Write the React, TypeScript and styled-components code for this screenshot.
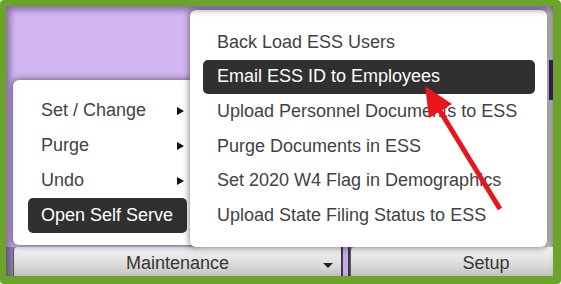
import React from "react";
import styled, { createGlobalStyle } from "styled-components";

const Global = createGlobalStyle`
  html, body { margin: 0; padding: 0; background: #ffffff; }
  body { font-family: "Liberation Sans", Arial, sans-serif; }
`;

const Frame = styled.div`
  position: relative;
  box-sizing: border-box;
  width: 561px;
  height: 284px;
  border-style: solid;
  border-color: #6ba32c;
  border-width: 6px 8px 8px 6px;
  border-radius: 4px;
  background: #d1b6f1;
  display: flex;
  flex-direction: column;
  overflow: hidden;
`;

const Shade = styled.div`
  position: absolute;
  inset: 0;
  pointer-events: none;
  box-shadow: inset 4px 4px 6px rgba(40, 20, 60, 0.45);
  z-index: 5;
`;

const Upper = styled.div`
  flex: 1;
  display: flex;
  justify-content: flex-end;
`;

const RightStrip = styled.div`
  width: 6px;
  background: linear-gradient(to right, #d8d8d8, #9c9c9c);
  display: flex;
  flex-direction: column;
  padding-top: 54px;
  box-sizing: border-box;
`;

const StripMark = styled.div`
  margin-left: 2px;
  width: 4px;
  height: 40px;
  background: #3b1c5e;
`;

const Bar = styled.div`
  height: 29px;
  display: flex;
  padding-left: 7px;
  background: linear-gradient(to bottom, #9a82b6 0%, #9a82b6 40%, #8c8c8c 100%);
`;

const BarButton = styled.div<{ $pad?: number; $w?: number }>`
  position: relative;
  box-sizing: border-box;
  ${(p) => (p.$w ? `width: ${p.$w}px;` : "flex: 1;")}
  display: flex;
  align-items: center;
  justify-content: center;
  padding-left: ${(p) => p.$pad ?? 0}px;
  background: linear-gradient(to bottom, #f2f2f2 0%, #e3e3e3 45%, #c4c4c4 100%);
  border-left: 1px solid #5c5c5c;
  border-top-left-radius: 4px;
  font-size: 18px;
  color: #353535;
  padding-top: 4px;
`;

const Caret = styled.span`
  position: absolute;
  right: 8px;
  top: 16px;
  width: 0;
  height: 0;
  border-left: 5px solid transparent;
  border-right: 5px solid transparent;
  border-top: 5px solid #222;
`;

const Divider = styled.div`
  width: 9px;
  box-sizing: border-box;
  background: #c4a8ea;
  border-left: 2px solid #3a3a3a;
  border-right: 2px solid #3a3a3a;
`;

const Menu = styled.div<{ $l: number; $t: number; $w: number; $h: number; $pt: number }>`
  position: absolute;
  left: ${(p) => p.$l}px;
  top: ${(p) => p.$t}px;
  width: ${(p) => p.$w}px;
  height: ${(p) => p.$h}px;
  box-sizing: border-box;
  padding: ${(p) => p.$pt}px 12px 0 ${(p) => (p.$l > 100 ? 13 : 15)}px;
  background: #ffffff;
  border-radius: 6px;
  box-shadow: 0 0 6px 1px rgba(0, 0, 0, 0.45);
  display: flex;
  flex-direction: column;
  z-index: 2;
`;

const Item = styled.div<{ $active?: boolean; $h: number; $pl: number }>`
  position: relative;
  height: ${(p) => p.$h}px;
  flex: none;
  display: flex;
  align-items: center;
  padding-left: ${(p) => p.$pl}px;
  border-radius: 5px;
  font-size: 18px;
  color: ${(p) => (p.$active ? "#ffffff" : "#424242")};
  background: ${(p) => (p.$active ? "#303030" : "transparent")};
  white-space: nowrap;
`;

const SubArrow = styled.span`
  position: absolute;
  right: 3px;
  top: 50%;
  margin-top: -4px;
  width: 0;
  height: 0;
  border-top: 4.5px solid transparent;
  border-bottom: 4.5px solid transparent;
  border-left: 7px solid #111;
`;

const Overlay = styled.svg`
  position: absolute;
  left: -6px;
  top: -6px;
  z-index: 4;
  pointer-events: none;
`;

const leftItems = ["Set / Change", "Purge", "Undo", "Open Self Serve"];
const rightItems = [
  "Back Load ESS Users",
  "Email ESS ID to Employees",
  "Upload Personnel Documents to ESS",
  "Purge Documents in ESS",
  "Set 2020 W4 Flag in Demographics",
  "Upload State Filing Status to ESS",
];

export default function App() {
  return (
    <>
      <Global />
      <Frame>
        <Upper>
          <RightStrip>
            <StripMark />
          </RightStrip>
        </Upper>
        <Bar>
          <BarButton $w={328}>
            Maintenance
            <Caret />
          </BarButton>
          <Divider />
          <BarButton $pad={68}>Setup</BarButton>
        </Bar>

        <Menu $l={7} $t={74} $w={186} $h={165} $pt={13}>
          {leftItems.map((t, i) => (
            <Item key={t} $h={35} $pl={13} $active={i === 3}>
              {t}
              {i < 3 && <SubArrow />}
            </Item>
          ))}
        </Menu>

        <Menu $l={184} $t={4} $w={357} $h={237} $pt={15}>
          {rightItems.map((t, i) => (
            <Item key={t} $h={34.6} $pl={14} $active={i === 1}>
              {t}
            </Item>
          ))}
        </Menu>

        <Overlay width={561} height={284} viewBox="0 0 561 284">
          <line x1={500} y1={209} x2={437} y2={106} stroke="#e8161b" strokeWidth={5} strokeLinecap="butt" />
          <polygon points="425,86 452,104 429,118" fill="#e8161b" />
        </Overlay>
        <Shade />
      </Frame>
    </>
  );
}
